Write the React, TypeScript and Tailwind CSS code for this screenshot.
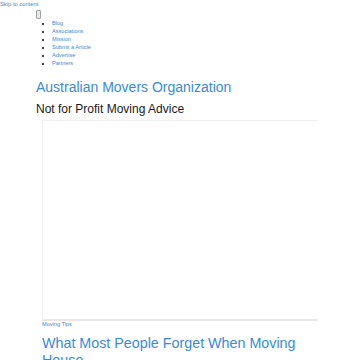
import React from "react";

export default function App() {
  const links = ["Blog", "Associations", "Mission", "Submit a Article", "Advertise", "Partners"];
  return (
    <div
      className="w-[360px] h-[360px] overflow-hidden bg-white"
      style={{ fontFamily: '"Liberation Sans", Arial, sans-serif' }}
    >
      <a href="#content" className="block text-[5.8px] leading-[8px] text-[#3b8ad6]">
        Skip to content
      </a>
      <div className="px-[36px]">
        <button className="mt-[2px] block w-[5px] h-[9px] border border-[#a0a0a0] bg-[#e9e9e9] rounded-[1px]" />
        <ul className="list-disc pl-[16px] text-[5.6px] leading-[8px] text-[#3b8ad6] marker:text-black">
          {links.map((l) => (
            <li key={l}>
              <a href="#">{l}</a>
            </li>
          ))}
        </ul>
        <h1 className="mt-[12px] text-[14px] leading-[16px] text-[#3b8ad6]">
          Australian Movers Organization
        </h1>
        <h2 className="mt-[6.5px] text-[12px] leading-[14px] text-[#1a1a1a]">
          Not for Profit Moving Advice
        </h2>
        <div className="px-[6px] mt-[4.5px]">
          <div className="h-[201px] border-t border-l border-b-2 border-t-[#f0f0f0] border-l-[#eeeeee] border-b-[#e8e8e8]" />
          <div className="text-[5.6px] leading-[6px] text-[#3b8ad6]">Moving Tips</div>
          <h2 className="mt-[8px] text-[14.3px] leading-[17px] text-[#3b8ad6]">
            What Most People Forget When Moving House
          </h2>
        </div>
      </div>
    </div>
  );
}
